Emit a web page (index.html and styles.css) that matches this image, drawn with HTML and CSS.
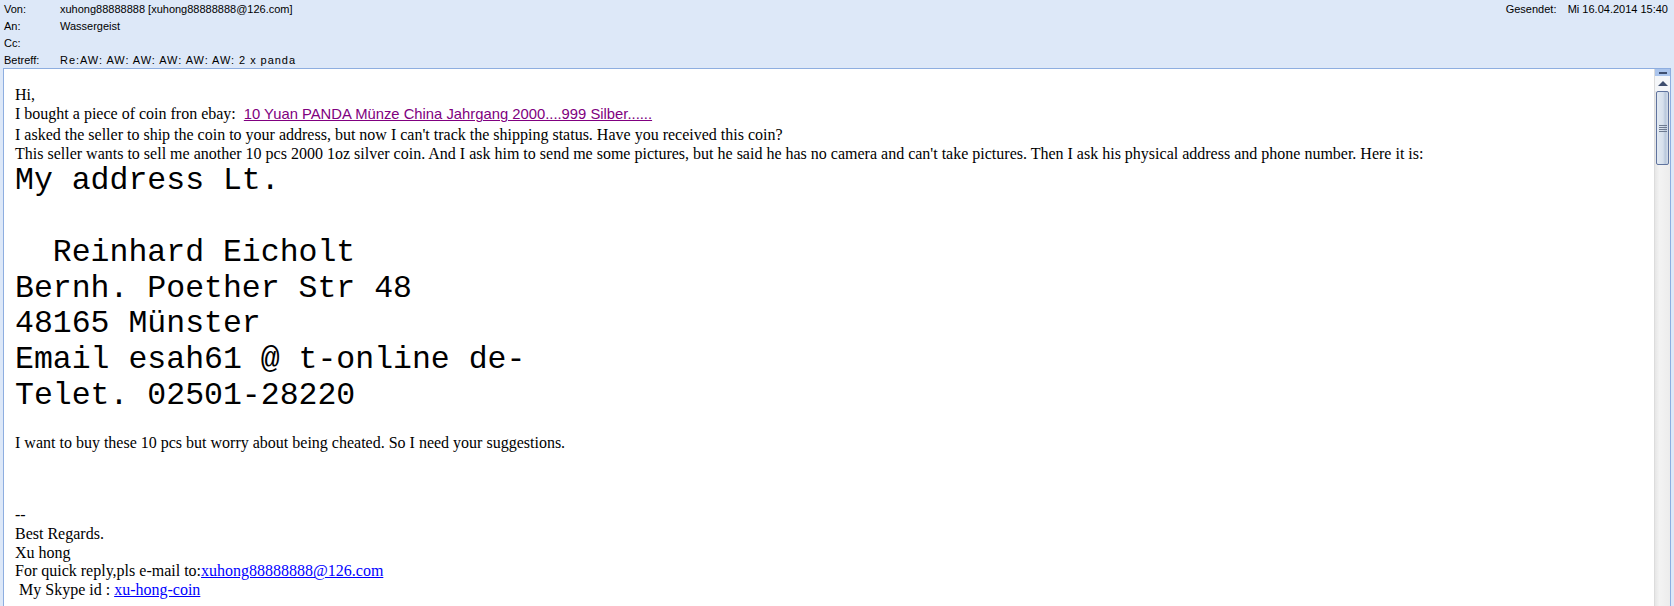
FILE: index.html
```html
<!DOCTYPE html>
<html lang="de">
<head>
    <meta charset="UTF-8">
    <meta name="viewport" content="width=device-width, initial-scale=1.0">
    <title>Re:AW: AW: AW: AW: AW: AW: 2 x panda</title>
    <link rel="stylesheet" href="styles.css">
</head>
<body>
    <div class="kopf">
        <div class="zeile">
            <span class="feld">Von:</span>
            <span class="wert">xuhong88888888 [xuhong88888888@126.com]</span>
            <span class="gesendet"><span class="feld-rechts">Gesendet:</span>Mi 16.04.2014 15:40</span>
        </div>
        <div class="zeile">
            <span class="feld">An:</span>
            <span class="wert">Wassergeist</span>
        </div>
        <div class="zeile">
            <span class="feld">Cc:</span>
            <span class="wert"></span>
        </div>
        <div class="zeile">
            <span class="feld">Betreff:</span>
            <span class="wert betreff">Re:AW: AW: AW: AW: AW: AW: 2 x panda</span>
        </div>
    </div>

    <div class="nachricht">
        <div class="inhalt">
            <div class="absatz">
                Hi,<br>
                I bought a piece of coin fron ebay:&nbsp; <a class="ebay" href="#">10 Yuan PANDA Münze China Jahrgang 2000....999 Silber......</a><br>
                I asked the seller to ship the coin to your address, but now I can't track the shipping status. Have you received this coin?<br>
                This seller wants to sell me another 10 pcs 2000 1oz silver coin. And I ask him to send me some pictures, but he said he has no camera and can't take pictures. Then I ask his physical address and phone number. Here it is:
            </div>
            <pre class="adresse">My address Lt.

  Reinhard Eicholt
Bernh. Poether Str 48
48165 Münster
Email esah61 @ t-online de-
Telet. 02501-28220</pre>
            <div class="absatz frage">I want to buy these 10 pcs but worry about being cheated. So I need your suggestions.</div>
            <div class="signatur">
                --<br>
                Best Regards.<br>
                Xu hong<br>
                For quick reply,pls e-mail to:<a href="#">xuhong88888888@126.com</a><br>
                &nbsp;My Skype id : <a href="#">xu-hong-coin</a>
            </div>
        </div>

        <div class="scrollleiste">
            <div class="teiler"><span></span></div>
            <div class="pfeil"></div>
            <div class="griff">
                <span></span><span></span><span></span><span></span>
            </div>
        </div>
    </div>
</body>
</html>
```

FILE: styles.css
```css
*{
    margin: 0;
    padding: 0;
    box-sizing: border-box;
}
body{
    width: 1674px;
    height: 606px;
    overflow: hidden;
    background-color: #dde8f8;
}

/* Kopfbereich mit Von / An / Cc / Betreff */
.kopf{
    height: 68px;
    padding-top: 1px;
    font-family: 'Liberation Sans', Arial, sans-serif;
    font-size: 11px;
    color: #000;
}
.zeile{
    display: flex;
    height: 17px;
    line-height: 17px;
}
.feld{
    width: 60px;
    padding-left: 4px;
}
.wert{
    flex: 1;
}
.betreff{
    letter-spacing: 0.95px;
}
.gesendet{
    padding-right: 6px;
}
.feld-rechts{
    display: inline-block;
    width: 62px;
}

/* Nachrichtentext */
.nachricht{
    display: flex;
    height: 538px;
    margin: 0 3px;
    border: 1px solid #8eaee0;
    border-bottom: none;
    background-color: white;
}
.inhalt{
    flex: 1;
    padding: 16px 0 0 11px;
    font-family: 'Liberation Serif', 'Times New Roman', serif;
    font-size: 16px;
    color: #000;
}
.absatz{
    line-height: 19.3px;
}
.ebay{
    font-family: 'Liberation Sans', Arial, sans-serif;
    font-size: 14.8px;
    color: #800080;
}
.adresse{
    font-family: 'Liberation Mono', 'Courier New', monospace;
    font-size: 31.5px;
    line-height: 35.8px;
}
.frage{
    margin-top: 19px;
}
.signatur{
    margin-top: 54px;
    line-height: 18.8px;
}
.signatur a{
    color: #0000ff;
}

/* Bildlaufleiste rechts */
.scrollleiste{
    width: 16px;
    background: linear-gradient(to right, #e6e6e6, #f3f3f3 30%, #ececec);
    border-left: 1px solid #dcdcdc;
}
.teiler{
    height: 7px;
    background-color: #aac4ec;
    display: flex;
    justify-content: center;
    align-items: center;
}
.teiler span{
    width: 8px;
    height: 2px;
    background-color: #3e4f70;
}
.pfeil{
    height: 15px;
    position: relative;
    background-color: #f4f6f9;
}
.pfeil::after{
    content: "";
    position: absolute;
    left: 3px;
    top: 5px;
    border-left: 5px solid transparent;
    border-right: 5px solid transparent;
    border-bottom: 5px solid #3d4d6e;
}
.griff{
    height: 74px;
    margin: 0 1px;
    border: 1px solid #5f739e;
    border-radius: 2px;
    background: linear-gradient(to right, #e3eaf3, #d6e0ec 55%, #b9c8dc 75%, #d4dde9);
    display: flex;
    flex-direction: column;
    justify-content: center;
    align-items: center;
    gap: 1px;
}
.griff span{
    width: 8px;
    height: 1px;
    background-color: #6d7a90;
}
```
